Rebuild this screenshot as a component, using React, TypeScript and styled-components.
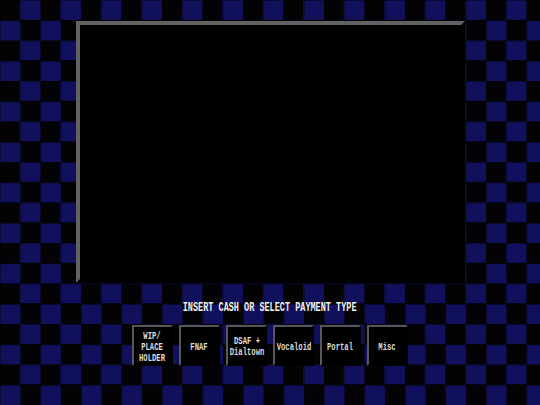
import styled, { createGlobalStyle } from 'styled-components';

const TILE = 20.25;

const GlobalStyle = createGlobalStyle`
  html, body {
    margin: 0;
    padding: 0;
  }

  body {
    background-color: #020204;
    background-image:
      linear-gradient(to right, rgba(0, 0, 0, 0.45) 1px, transparent 1px),
      linear-gradient(to bottom, rgba(0, 0, 0, 0.45) 1px, transparent 1px),
      repeating-conic-gradient(#10105c 0 25%, #030306 0 50%);
    background-size: ${TILE}px ${TILE}px, ${TILE}px ${TILE}px, ${TILE * 2}px ${TILE * 2}px;
    font-family: "Liberation Mono", "DejaVu Sans Mono", monospace;
  }
`;

const payments = [
  ['WIP/', 'PLACE', 'HOLDER'],
  ['FNAF'],
  ['DSAF +', 'Dialtown'],
  ['Vocaloid'],
  ['Portal'],
  ['Misc'],
];

const App = () => (
  <>
    <GlobalStyle />
    <StyledPage>
      <StyledScreen />
      <StyledPrompt>
        <StyledSquash>INSERT CASH OR SELECT PAYMENT TYPE</StyledSquash>
      </StyledPrompt>
      <StyledButtonRow>
        {payments.map((lines) => (
          <StyledPayButton key={lines.join(' ')} type="button">
            <StyledLabel>
              {lines.map((line) => (
                <span key={line}>{line}</span>
              ))}
            </StyledLabel>
          </StyledPayButton>
        ))}
      </StyledButtonRow>
    </StyledPage>
  </>
);

const StyledPage = styled.div`
  display: flex;
  flex-direction: column;
  align-items: center;
  height: 100vh;
  box-sizing: border-box;
  padding-top: 21px;
`;

const StyledScreen = styled.div`
  width: 389px;
  height: 262px;
  box-sizing: border-box;
  background: #000;
  border-style: solid;
  border-width: 4px;
  border-color: #626262 #000 #000 #626262;
`;

const StyledPrompt = styled.div`
  margin-top: 19px;
  height: 12px;
  line-height: 12px;
  color: #f2f2f2;
  font-size: 13px;
  font-weight: bold;
  white-space: nowrap;
`;

const StyledSquash = styled.span`
  display: inline-block;
  transform: scaleX(0.655);
  transform-origin: center;
`;

const StyledButtonRow = styled.div`
  display: flex;
  gap: 6px;
  margin-top: 11px;
`;

const StyledPayButton = styled.button`
  display: flex;
  align-items: center;
  justify-content: center;
  width: 41px;
  height: 41px;
  padding: 3px 0 0;
  box-sizing: border-box;
  background: #000;
  border-style: solid;
  border-width: 2px;
  border-color: #585858 #000 #000 #585858;
  color: #dcdcdc;
  font-family: "Liberation Mono", "DejaVu Sans Mono", monospace;
  font-size: 10px;
  font-weight: bold;
  cursor: pointer;
`;

const StyledLabel = styled.span`
  display: flex;
  flex-direction: column;
  align-items: center;
  line-height: 11px;
  white-space: nowrap;
  transform: scaleX(0.72);
`;

export default App;
